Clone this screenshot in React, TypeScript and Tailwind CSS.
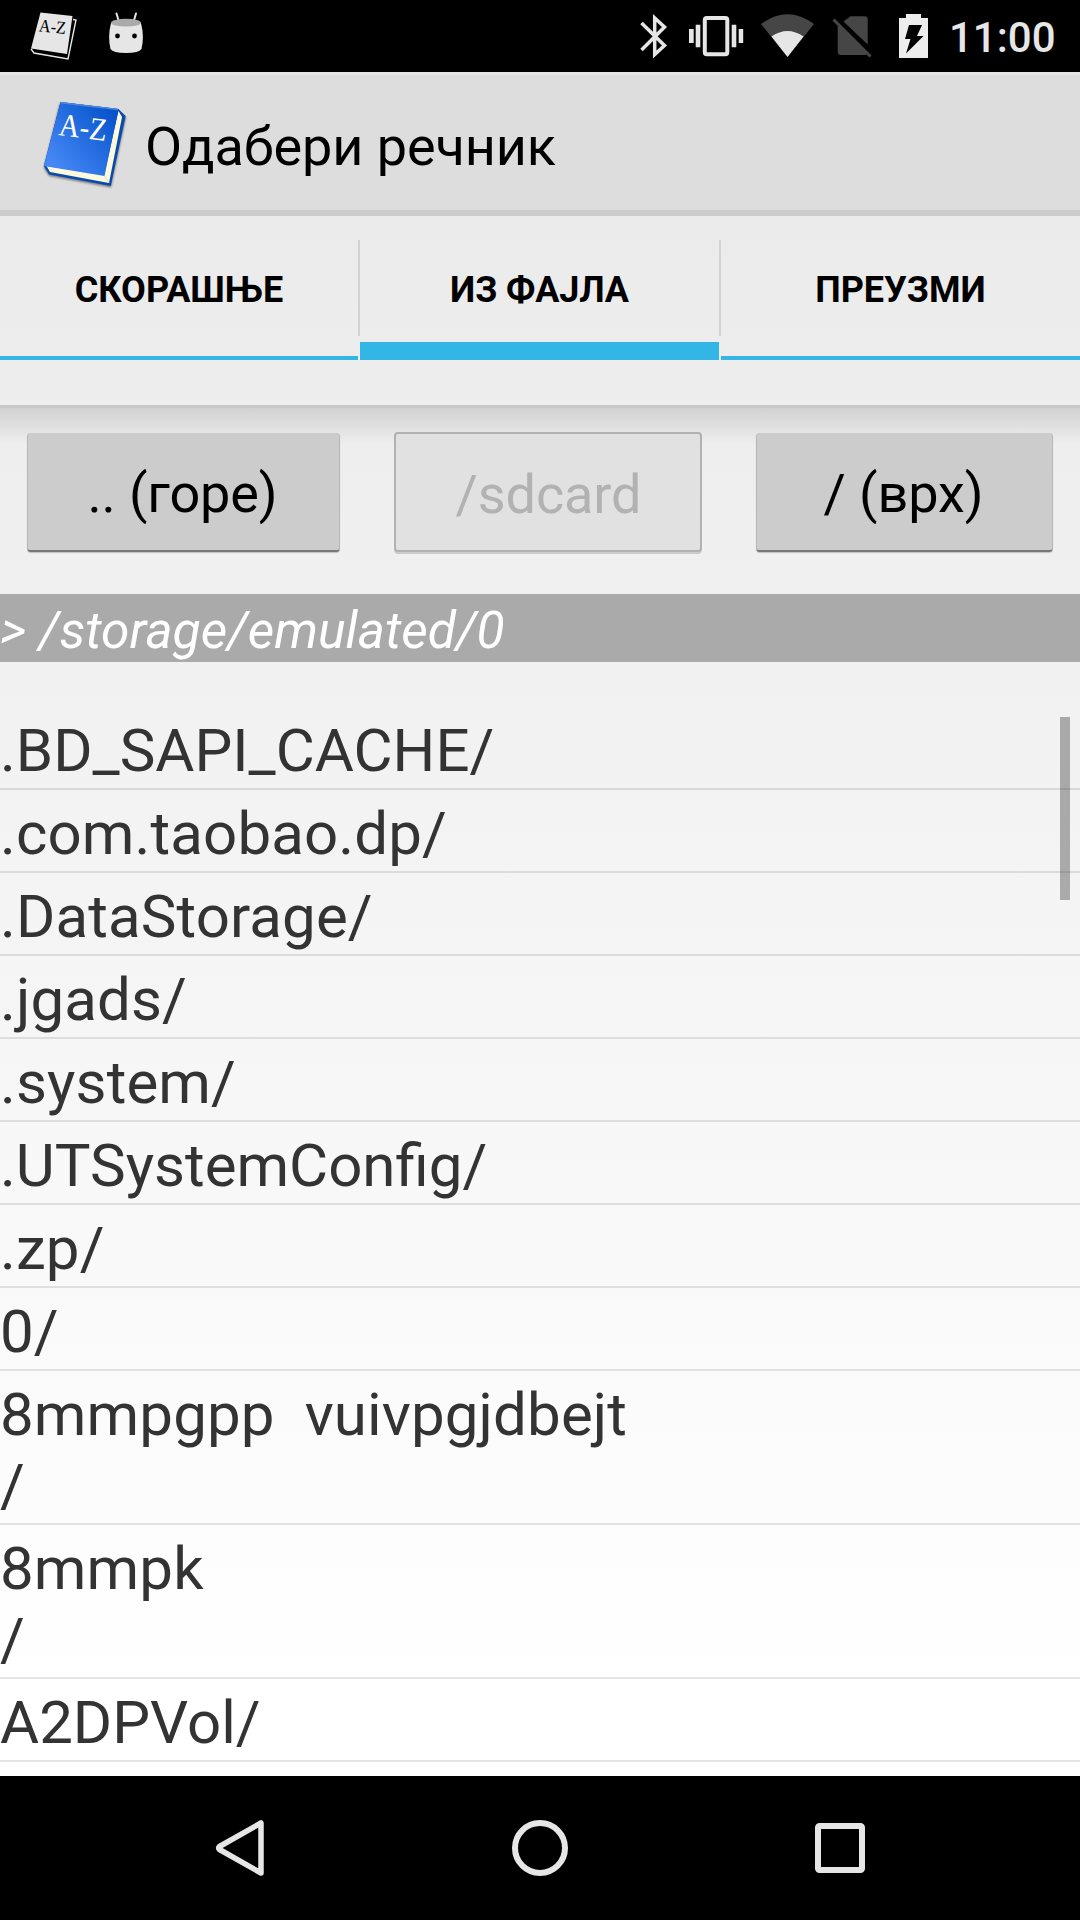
import React from "react";

const files = [
  { name: ".BD_SAPI_CACHE/" },
  { name: ".com.taobao.dp/", loose: true },
  { name: ".DataStorage/", loose: true },
  { name: ".jgads/", loose: true },
  { name: ".system/", loose: true },
  { name: ".UTSystemConfig/" },
  { name: ".zp/", loose: true },
  { name: "0/" },
  { name: "8mmpgpp\u00a0 vuivpgjdbejt\n/", loose: true },
  { name: "8mmpk\n/", loose: true },
  { name: "A2DPVol/" },
];

function NoteBook() {
  return (
    <svg className="ml-[30px] h-[48px] w-[48px]" viewBox="30 12 48 48">
      <path d="M40.5 12.5 L72.5 16 L67 54 L31 48.5 Z" fill="#e6e6e6" />
      <path d="M73 19.5 L76 20 L68 59 L34 53 L31 49" fill="none" stroke="#e6e6e6" strokeWidth="1.4" />
      <text x="38.5" y="31.3" transform="rotate(6 38.5 31.3)" fontSize="18" textLength="27" lengthAdjust="spacingAndGlyphs" fontFamily="Liberation Serif, serif" fill="#000">A-Z</text>
    </svg>
  );
}

function RobotHead() {
  return (
    <svg className="ml-[30px] h-[48px] w-[36px]" viewBox="108 12 36 48">
      <path d="M116.5 13.5 L119 22 M136 13.5 L133.5 22" stroke="#e6e6e6" strokeWidth="2" strokeLinecap="round" />
      <path d="M111 23 L141 23 Q144.500 36 141.500 49 Q139 53 126 53 Q113 53 110.500 49 Q107.500 36 111 23Z" fill="#e6e6e6" />
      <ellipse cx="126" cy="22.700" rx="15" ry="3.900" fill="#aaa" />
      <circle cx="117.500" cy="36" r="2.400" fill="#000" />
      <circle cx="134.500" cy="36" r="2.400" fill="#000" />
    </svg>
  );
}

function StatusIcons() {
  return (
    <svg className="h-[72px] w-[310px]" viewBox="630 0 310 72">
      <path d="M641.500 23 L664.500 45.500 L654.700 54.500 V18 L664.500 27 L641.500 50" fill="none" stroke="#e6e6e6" strokeWidth="3.500" />
      <rect x="704.800" y="18" width="22.500" height="36.200" rx="2" fill="none" stroke="#e6e6e6" strokeWidth="4" />
      <path d="M689 29h4.700v14H689z M695.700 24.700h4.600v22.600h-4.600z M731.700 24.700h4.600v22.600h-4.600z M738.700 29h4.500v14h-4.500z" fill="#e6e6e6" />
      <path d="M761 24 Q787.500 4.500 814 24 L787.500 57Z" fill="#464646" />
      <path d="M771.500 36.500 Q787.500 25.500 803.500 36.500 L787.500 57Z" fill="#e6e6e6" />
      <path d="M850.500 16.300 H864.500 Q867.700 16.300 867.700 19.500 V44.500 L843.500 21.500Z M837.700 24.500 L867.700 54 Q866.500 55 864.500 55 H841 Q837.700 55 837.700 51.500Z" fill="#464646" />
      <path d="M833.500 19.500 L870.500 56.500" stroke="#464646" strokeWidth="3" />
      <path d="M899 18 H906 V14 H921 V18 H928 V58 H899Z" fill="#ededed" />
      <path d="M909 25 H922 L917 36 H923.500 L906 53.500 L910.500 39 H905Z" fill="#000" />
    </svg>
  );
}

function BookIcon() {
  return (
    <svg className="ml-[36px] h-[96px] w-[96px] shrink-0" viewBox="36 95 96 96">
      <defs>
        <linearGradient id="cover" x1="0.1" y1="0.8" x2="0.9" y2="0.1">
          <stop offset="0" stopColor="#4588f5" />
          <stop offset="1" stopColor="#0753cc" />
        </linearGradient>
        <filter id="soft" x="-10%" y="-10%" width="120%" height="120%">
          <feGaussianBlur stdDeviation="1.300" />
        </filter>
      </defs>
      <path d="M60 103 L126 117 L111 187.500 L49 176 L44 168Z" fill="#000" opacity="0.45" filter="url(#soft)" />
      <path d="M60.500 102 L118.500 109 L125.700 116 L110.800 186 L49 174.500 L43.800 166Z" fill="#0a4cae" />
      <path d="M118.500 111 L122 117 L109 183 L50 172 L46.500 166 L104 175Z" fill="#fdf9df" />
      <path d="M104.500 176 L109 183" stroke="#d8d3b4" strokeWidth="0.800" />
      <path d="M60.500 102 L118.500 109 L104.500 176 L44 166Z" fill="url(#cover)" />
      <path d="M60.700 102.700 L118 109.500" stroke="#4b88df" strokeWidth="1.500" />
      <text x="58" y="135" transform="rotate(7 58 135)" fontSize="32" textLength="48" lengthAdjust="spacingAndGlyphs" fontFamily="Liberation Serif, serif" fill="#fff">A-Z</text>
    </svg>
  );
}

function Tab({ label, active, className }: { label: string; active?: boolean; className: string }) {
  return (
    <div className={`flex h-[144px] flex-col ${className}`}>
      <div className="flex flex-1 items-center justify-center text-[36px] leading-[42px] font-bold text-black">
        <span className={active ? "pt-[22px] tracking-[-0.15px]" : "pt-[8px]"}>{label}</span>
      </div>
      <div className={active ? "h-[18px] bg-[#33b5e5]" : "h-[4px] bg-[#33b5e5]"} />
    </div>
  );
}

function Divider() {
  return <div className="mt-6 h-24 w-[2px] bg-[#d3d3d3]" />;
}

function SolidButton({ label, className }: { label: string; className: string }) {
  return (
    <button className={`h-[119px] rounded-[4px] border-x border-b-2 border-x-[#b8b8b8] border-b-[#777] bg-[#ccc] pt-[5px] pr-[2px] text-[54px] leading-[64px] tracking-[-0.1px] text-black shadow-[0_1px_1px_rgba(0,0,0,0.2)] ${className}`}>
      {label}
    </button>
  );
}

export default function App() {
  return (
    <div className="flex h-[1920px] w-[1080px] flex-col overflow-hidden bg-linear-to-b from-[#e8e8e8] to-white to-88% font-[Roboto,sans-serif]">
      <header className="flex h-[72px] shrink-0 items-center bg-black">
        <NoteBook />
        <RobotHead />
        <div className="ml-auto flex items-center">
          <StatusIcons />
          <span className="ml-[9px] w-[131px] pt-[3px] text-[42px] leading-[72px] font-medium whitespace-nowrap text-[#e6e6e6]">11:00</span>
        </div>
      </header>

      <div className="flex h-[144px] shrink-0 items-center border-t-[3px] border-b-[6px] border-t-[#e5e5e5] border-b-[#ccc] bg-[#ddd]">
        <BookIcon />
        <h1 className="ml-[13px] pt-[8px] text-[54px] leading-[64px] tracking-[-0.1px] text-black">Одабери речник</h1>
      </div>

      <nav className="flex h-[192px] shrink-0 border-b-[3px] border-[#c8c8c8]">
        <Tab label="СКОРАШЊЕ" className="w-[358px]" />
        <Divider />
        <Tab label="ИЗ ФАЈЛА" active className="w-[359px]" />
        <Divider />
        <Tab label="ПРЕУЗМИ" className="w-[359px]" />
      </nav>

      <div className="flex h-[186px] shrink-0 items-start bg-linear-to-b from-black/12 to-transparent to-[36px] pt-[25px] pl-[27px]">
        <SolidButton label=".. (горе)" className="w-[313px]" />
        <button className="-mt-[1px] ml-[54px] h-[120px] w-[308px] rounded-[4px] border-2 border-[#b2b2b2] bg-[#e1e1e1] pt-[6px] pl-[1px] text-[54px] leading-[64px] tracking-[-0.1px] text-[#b2b2b2] shadow-[0_2px_0_#cbcbcb]">/sdcard</button>
        <SolidButton label="/ (врх)" className="ml-[54px] w-[297px]" />
      </div>

      <div className="h-[68px] shrink-0 bg-[#aaa] pt-[7px] text-[51.5px] leading-[60px] whitespace-pre text-white italic">{"> /storage/emulated/0"}</div>

      <main className="relative min-h-0 flex-1 overflow-hidden pt-[45px]">
        {files.map(({ name, loose }) => (
          <div key={name} className={`border-b-2 border-black/10 pt-[8px] pb-[2px] text-[60px] leading-[71px] whitespace-pre text-[#333] ${loose ? "tracking-[0.13px]" : ""}`}>{name}</div>
        ))}
        <div className="absolute top-[55px] right-[10px] h-[183px] w-[10px] bg-black/30" />
      </main>

      <footer className="h-[144px] shrink-0 bg-black">
        <svg className="h-[144px] w-[1080px]" viewBox="0 1776 1080 144" fill="none" stroke="#e6e6e6">
          <path d="M261 1823 V1873 L219.500 1849.500 Q218 1848 219.500 1846.500Z" strokeWidth="5.500" strokeLinejoin="round" />
          <circle cx="540" cy="1848" r="25" strokeWidth="6" />
          <rect x="818" y="1826" width="44" height="44" rx="1.500" strokeWidth="6" />
        </svg>
      </footer>
    </div>
  );
}
